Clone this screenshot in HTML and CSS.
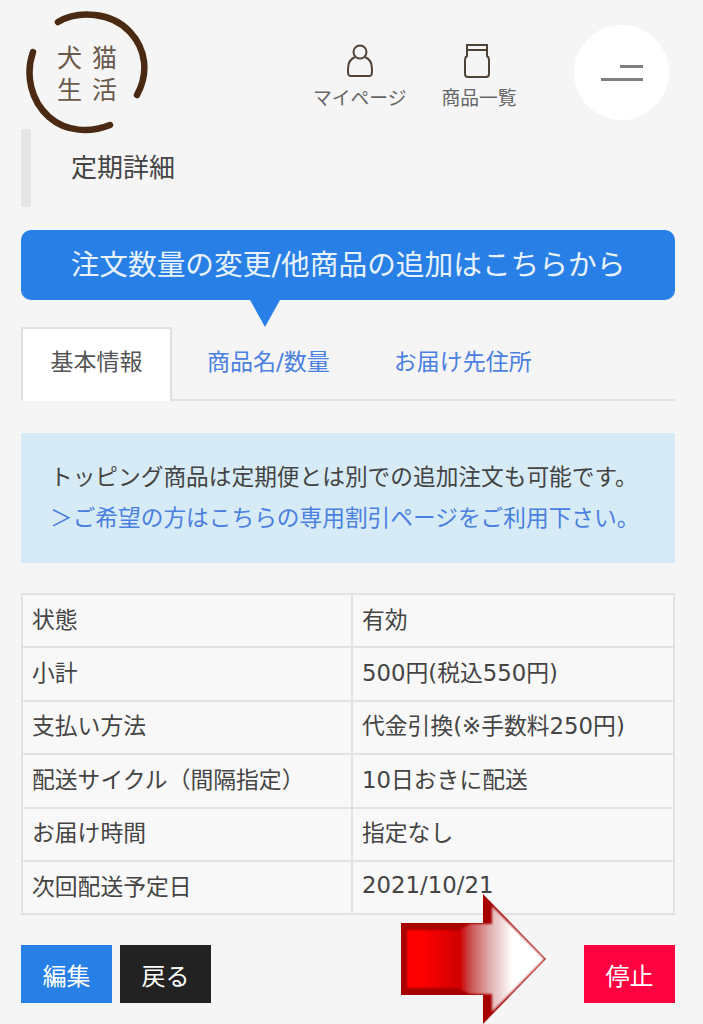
FILE: index.html
```html
<html>
    <head>
        <title>定期詳細</title>
        <link rel="stylesheet" href="styles.css">
    </head>
    <body>
        <div class="page">
            <header class="header">
                <div class="logo">
                    <svg viewBox="0 0 130 124" width="130" height="124">
                        <path class="logo-ring" d="M34 11 C54 -1 88 1 106 21 C122 38 125 62 113 84"/>
                        <path class="logo-ring" d="M9 41 C1 64 7 90 25 106 C42 121 66 122 86 114"/>
                    </svg>
                    <div class="logo-text">
                        <div>犬</div><div>猫</div><div>生</div><div>活</div>
                    </div>
                </div>
                <nav class="nav">
                    <a class="nav-item">
                        <svg class="nav-icon" viewBox="0 0 30 36" width="30" height="36">
                            <circle cx="15" cy="9" r="6.5"/>
                            <path d="M10 14 C5 16 3 20 3 26 C3 30 3 33 5 33 L25 33 C27 33 27 30 27 26 C27 20 25 16 20 14"/>
                        </svg>
                        <span>マイページ</span>
                    </a>
                    <a class="nav-item nav-item-items">
                        <svg class="nav-icon nav-icon-jar" viewBox="0 0 30 36" width="30" height="36">
                            <path d="M5 2 L25 2 L25 13 C27 14 27 15 27 17 L27 31 C27 33 26 34 24 34 L6 34 C4 34 3 33 3 31 L3 17 C3 15 3 14 5 13 Z"/>
                            <path d="M5 7 L25 7"/>
                        </svg>
                        <span>商品一覧</span>
                    </a>
                </nav>
                <button class="menu-btn"><i class="menu-short"></i><i class="menu-long"></i></button>
            </header>

            <h1 class="title">定期詳細</h1>

            <a class="banner">注文数量の変更/他商品の追加はこちらから</a>

            <ul class="tabs">
                <li class="tab active">基本情報</li>
                <li class="tab">商品名/数量</li>
                <li class="tab">お届け先住所</li>
            </ul>

            <div class="notice">
                トッピング商品は定期便とは別での追加注文も可能です。<br/>
                <a>＞ご希望の方はこちらの専用割引ページをご利用下さい。</a>
            </div>

            <table class="details">
                <tr><td>状態</td><td>有効</td></tr>
                <tr><td>小計</td><td>500円(税込550円)</td></tr>
                <tr><td>支払い方法</td><td>代金引換(※手数料250円)</td></tr>
                <tr><td>配送サイクル（間隔指定）</td><td>10日おきに配送</td></tr>
                <tr><td>お届け時間</td><td>指定なし</td></tr>
                <tr><td>次回配送予定日</td><td>2021/10/21</td></tr>
            </table>

            <div class="actions">
                <button class="btn btn-edit">編集</button>
                <button class="btn btn-back">戻る</button>
                <button class="btn btn-stop">停止</button>
            </div>

            <svg class="arrow" viewBox="0 0 150 134" width="150" height="134">
                <defs>
                    <linearGradient id="arrowFill" gradientUnits="userSpaceOnUse" x1="0" y1="0" x2="150" y2="0">
                        <stop offset="0.14" stop-color="#ff0000"/>
                        <stop offset="0.40" stop-color="#d00000"/>
                        <stop offset="0.46" stop-color="#c84848"/>
                        <stop offset="0.60" stop-color="#e0b0b0"/>
                        <stop offset="0.75" stop-color="#ffffff"/>
                    </linearGradient>
                    <filter id="arrowSoft" x="-5%" y="-5%" width="110%" height="110%">
                        <feGaussianBlur stdDeviation="1"/>
                    </filter>
                </defs>
                <path d="M1 29 L83 29 L83 0 L146 65 L83 130 L83 101 L1 101 Z" fill="#A60000"/>
                <path d="M7 36 L58 36 L70 30 L92 30 L92 12 L144.5 65 L92 118 L92 100 L70 100 L58 94 L7 94 Z" fill="url(#arrowFill)" filter="url(#arrowSoft)"/>
            </svg>
        </div>
    </body>
</html>
```

FILE: styles.css
```css
* {
    box-sizing: border-box;
}
html,
body {
    margin: 0;
    height: 1024px;
    overflow: hidden;
}
body {
    color: #444;
    background-color: #F5F5F5;
    font-family: "DejaVu Sans", "Noto Sans CJK JP", sans-serif;
}
.page {
    position: relative;
    padding: 0 28px 0 21px;
    height: 1024px;
}
.header {
    display: flex;
    align-items: flex-start;
    height: 129px;
}
.logo {
    position: relative;
    width: 130px;
    height: 124px;
    margin: 11px 0 0 3px;
    flex-shrink: 0;
}
.logo-ring {
    fill: none;
    stroke: #4a2a12;
    stroke-width: 6.5;
    stroke-linecap: round;
}
.logo-text {
    position: absolute;
    top: 33px;
    left: 33px;
    display: grid;
    grid-template-columns: 35px 26px;
    grid-auto-rows: 32px;
    font-family: "Noto Sans CJK JP", sans-serif;
    font-size: 25px;
    line-height: 24px;
    color: #6a5a4c;
}
.nav {
    display: flex;
    margin: 43px 0 0 159px;
    gap: 35px;
}
.nav-item {
    display: flex;
    flex-direction: column;
    align-items: center;
    font-family: "Noto Sans CJK JP", sans-serif;
    font-size: 18.8px;
    line-height: 23px;
    color: #666;
    white-space: nowrap;
}
.nav-icon {
    margin-bottom: 6px;
    fill: none;
    stroke: #4d4338;
    stroke-width: 2;
}
.nav-icon-jar {
    margin-right: 5px;
}
.menu-btn {
    display: flex;
    flex-direction: column;
    align-items: flex-end;
    gap: 10px;
    width: 95px;
    height: 95px;
    margin: 25px 6px 0 auto;
    padding: 40px 26px 0 0;
    border: 0;
    border-radius: 50%;
    background-color: #fff;
}
.menu-short,
.menu-long {
    display: block;
    height: 3px;
    background-color: #808080;
}
.menu-short {
    width: 23px;
}
.menu-long {
    width: 42px;
}
.title {
    margin: 0;
    height: 78px;
    padding-left: 40px;
    border-left: 10px solid #E6E6E6;
    font-size: 26px;
    font-weight: 400;
    line-height: 78px;
    color: #444;
}
.banner {
    position: relative;
    display: block;
    width: 654px;
    height: 70px;
    margin-top: 23px;
    border-radius: 10px;
    background-color: #2880E6;
    color: #E8F2FD;
    font-size: 28.7px;
    line-height: 70px;
    text-align: center;
}
.banner::after {
    content: "";
    position: absolute;
    top: 70px;
    left: 229px;
    border-top: 27px solid #2880E6;
    border-left: 15px solid transparent;
    border-right: 15px solid transparent;
}
.tabs {
    display: flex;
    width: 654px;
    height: 74px;
    margin: 27px 0 0;
    padding: 0;
    list-style: none;
    border-bottom: 2px solid #E0E0E0;
}
.tab {
    padding: 0 29px 0 35px;
    font-size: 23px;
    line-height: 70px;
    color: #4A80E0;
}
.tab.active {
    width: 151px;
    height: 74px;
    padding: 0;
    text-align: center;
    line-height: 66px;
    background-color: #fff;
    border: 2px solid #E0E0E0;
    border-bottom: 0;
    color: #555;
}
.notice {
    width: 654px;
    height: 130px;
    margin-top: 32px;
    padding: 24px 0 0 29px;
    background-color: #D7EBF6;
    font-size: 22.7px;
    line-height: 41px;
    color: #444;
    white-space: nowrap;
}
.notice a {
    color: #4A80E0;
}
.details {
    width: 654px;
    margin-top: 30px;
    border-collapse: collapse;
    border: 2px solid #E2E2E2;
    background-color: #F8F8F8;
}
.details td {
    height: 53.4px;
    padding: 0 9px 5px;
    border: 2px solid #E2E2E2;
    font-size: 22.8px;
    color: #444;
    white-space: nowrap;
}
.details td:first-child {
    width: 330px;
}
.actions {
    display: flex;
    gap: 8px;
    width: 654px;
    margin-top: 30px;
}
.btn {
    width: 91px;
    height: 58px;
    border: 0;
    font-family: inherit;
    font-size: 24px;
    color: #fff;
}
.btn-edit {
    background-color: #2880E6;
}
.btn-back {
    background-color: #222;
}
.btn-stop {
    margin-left: auto;
    background-color: #FF0040;
}
.arrow {
    position: absolute;
    left: 400px;
    top: 894px;
}
```
